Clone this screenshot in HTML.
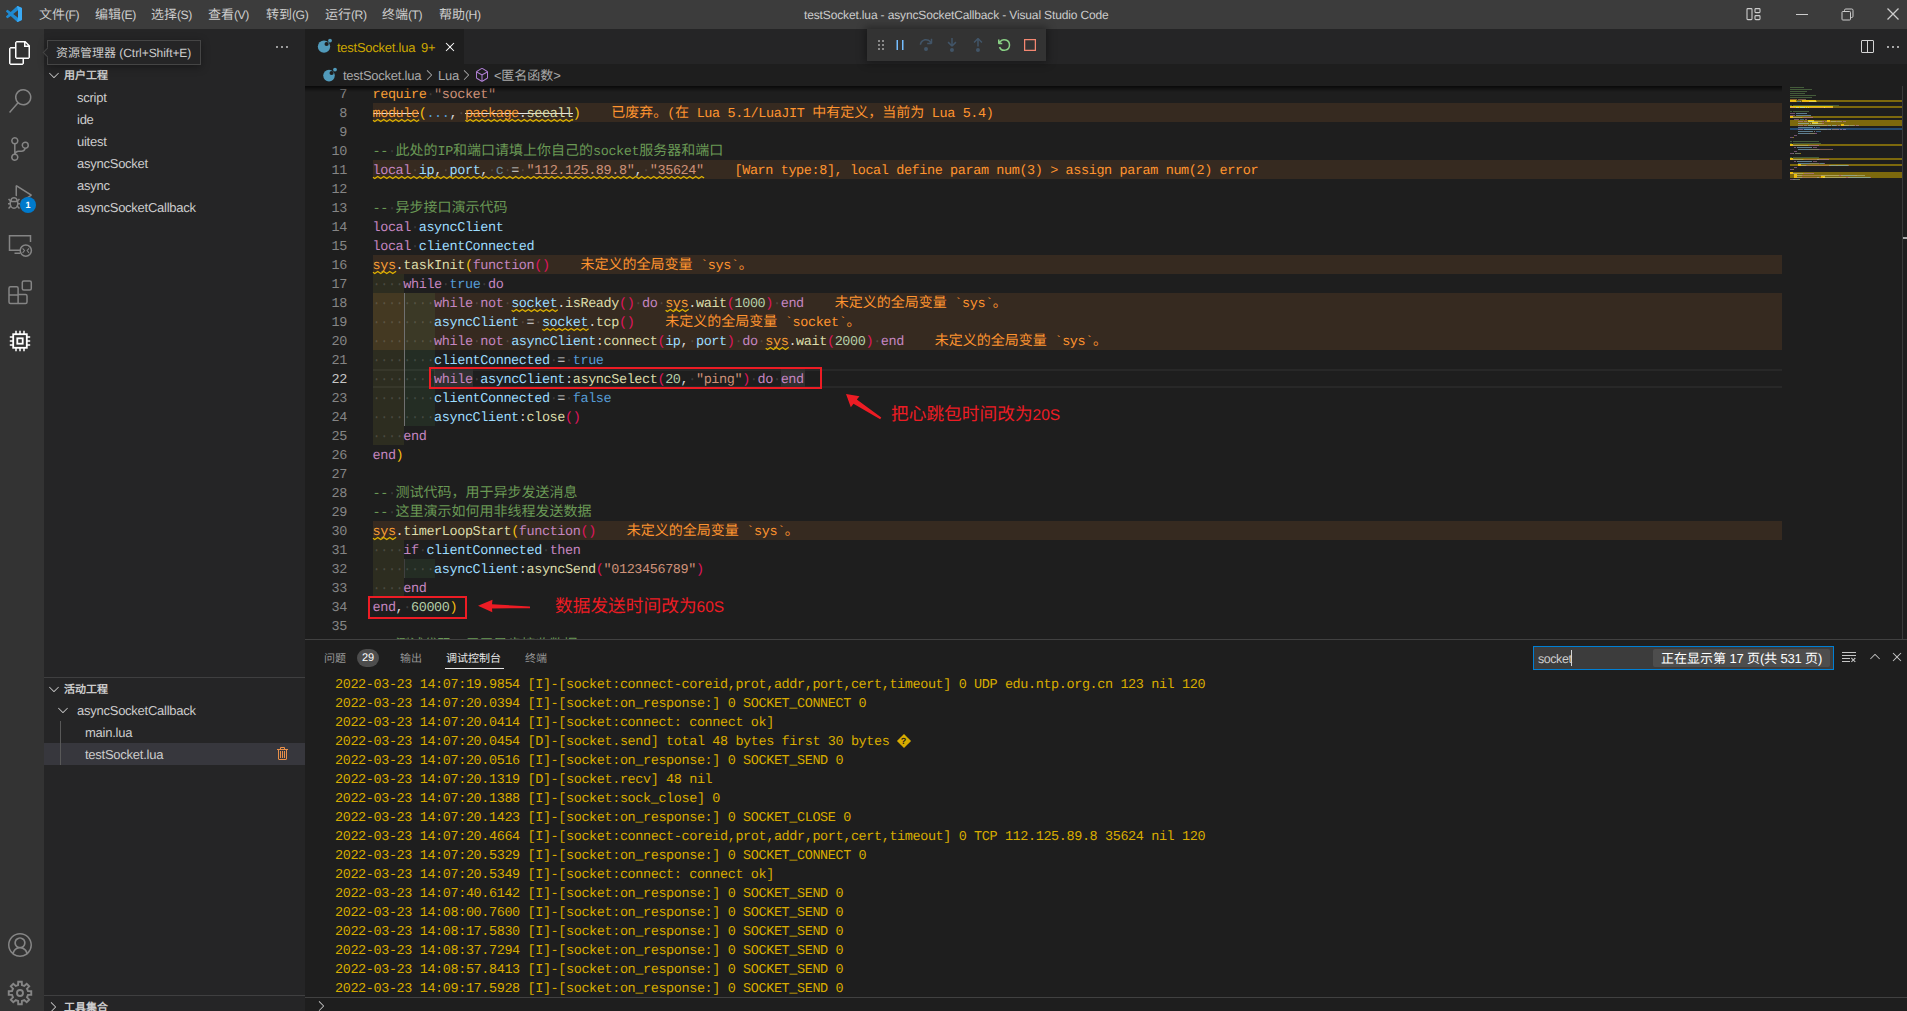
<!DOCTYPE html><html lang="zh-CN"><head><meta charset="utf-8"><title>testSocket.lua - asyncSocketCallback - Visual Studio Code</title><style>
*{box-sizing:border-box}
html,body{margin:0;padding:0}
body{width:1907px;height:1011px;overflow:hidden;background:#1e1e1e;position:relative;font-family:"Liberation Sans",sans-serif;font-size:13px;color:#ccc;text-rendering:geometricPrecision}
.abs,.abs>*{position:absolute}
div{position:absolute}
svg{position:absolute;overflow:visible}
.z{display:inline-block;white-space:nowrap;letter-spacing:0;line-height:0;text-align:justify;text-align-last:justify;font-family:"Liberation Sans",sans-serif}
.ui{white-space:nowrap;letter-spacing:-0.25px;line-height:20px;height:20px}
.m .z{font-size:13px}
.an .z{font-size:17.7px;font-weight:300}
.ans{font-family:"Liberation Sans",sans-serif;font-size:15.5px}
/* title */
#title{left:0;top:0;width:1907px;height:29px;background:#3c3c3c}
#act{left:0;top:29px;width:44px;height:982px;background:#333}
#side{left:44px;top:29px;width:261px;height:982px;background:#252526}
#tabs{left:305px;top:29px;width:1602px;height:35px;background:#252526}
#tab{left:0;top:0;width:159px;height:35px;background:#1e1e1e}
#bc{left:305px;top:64px;width:1602px;height:22px;background:#1e1e1e}
#ed{left:305px;top:86px;width:1602px;height:553px;background:#1e1e1e;overflow:hidden}
#edin{left:-305px;top:-86px;width:1907px;height:1011px}
#panel{left:305px;top:639px;width:1602px;height:372px;background:#1e1e1e;border-top:1px solid #414141}
.mono,.ln,.cd,.co{font-family:"Liberation Mono",monospace;font-size:13.5px;letter-spacing:-0.4013px;line-height:23px;height:19px;white-space:pre}
.ln{left:305px;width:42px;text-align:right;color:#858585}
.ln.act{color:#c6c6c6}
.cd{left:372.5px;color:#d4d4d4}
.cd .z{font-size:14px}
.co{left:335px;color:#d8ac00}
.lb{left:373px;width:1409px;height:19px;background:#362a20}
.cl{left:373px;width:1409px;height:19px;border-top:1px solid #2b2b2b;border-bottom:1px solid #2b2b2b;border-top-width:2px;border-bottom-width:2px;border-color:#282828}
.i1{left:373px;width:31px;height:19px;background:rgba(255,255,64,0.07)}
.i2{left:404px;width:31px;height:19px;background:rgba(127,255,127,0.07)}
.w{color:rgba(227,228,226,0.18)}
.k{color:#c586c0}.v{color:#9cdcfe}.f{color:#dcdcaa}.s{color:#ce9178}.n{color:#b5cea8}.c{color:#6a9955}.b{color:#569cd6}.o{color:#d4d4d4}
.g{color:#f79d35}
.b1{color:#f6c010}.b2{color:#e0155f}
.dim{opacity:.55}
.el{color:#ff942f}
.dl{background:linear-gradient(#e4e4e4,#e4e4e4) 0 5.5px/100% 1.2px no-repeat}
#mm{left:0;top:0;width:0;height:0}
#mm i{position:absolute;display:block}
.dia{display:inline-block;width:15.4px;height:10px;position:relative}
.dia b{position:absolute;left:1.5px;top:1px;width:10px;height:10px;background:#d8ac00;transform:rotate(45deg)}
.dia u{position:absolute;left:-1px;top:-1px;width:15px;text-align:center;color:#1e1e1e;font:bold 9px/14px 'Liberation Sans',sans-serif;text-decoration:none;letter-spacing:0}
</style></head><body>
<div id="title">
<svg style="left:6px;top:6px" width="16" height="16" viewBox="0 0 24 24" ><path fill="#1f8ad2" d="M23.15 2.587L18.21.21a1.494 1.494 0 0 0-1.705.29l-9.46 8.63-4.12-3.128a.999.999 0 0 0-1.276.057L.327 7.261A1 1 0 0 0 .326 8.74L3.899 12 .326 15.26a1 1 0 0 0 .001 1.479L1.65 17.94a.999.999 0 0 0 1.276.057l4.12-3.128 9.46 8.63a1.492 1.492 0 0 0 1.704.29l4.942-2.377A1.5 1.5 0 0 0 24 20.06V3.939a1.5 1.5 0 0 0-.85-1.352zm-5.146 14.861L10.826 12l7.178-5.448v10.896z"/><path fill="#3aaaf5" d="M18.004 6.552V17.448L16.5 23.5a1.492 1.492 0 0 0 1.71.29l4.942-2.377A1.5 1.5 0 0 0 24 20.06V3.939a1.5 1.5 0 0 0-.85-1.352L18.21.21a1.494 1.494 0 0 0-1.705.29z"/></svg>
<div class="ui m" style="left:39px;top:5px;color:#ccc;font-size:12.2px;letter-spacing:-0.45px;"><span class="z"  style="width:26.00px">文件</span>(F)</div>
<div class="ui m" style="left:95px;top:5px;color:#ccc;font-size:12.2px;letter-spacing:-0.45px;"><span class="z"  style="width:26.00px">编辑</span>(E)</div>
<div class="ui m" style="left:151px;top:5px;color:#ccc;font-size:12.2px;letter-spacing:-0.45px;"><span class="z"  style="width:26.00px">选择</span>(S)</div>
<div class="ui m" style="left:208px;top:5px;color:#ccc;font-size:12.2px;letter-spacing:-0.45px;"><span class="z"  style="width:26.00px">查看</span>(V)</div>
<div class="ui m" style="left:266px;top:5px;color:#ccc;font-size:12.2px;letter-spacing:-0.45px;"><span class="z"  style="width:26.00px">转到</span>(G)</div>
<div class="ui m" style="left:325px;top:5px;color:#ccc;font-size:12.2px;letter-spacing:-0.45px;"><span class="z"  style="width:26.00px">运行</span>(R)</div>
<div class="ui m" style="left:382px;top:5px;color:#ccc;font-size:12.2px;letter-spacing:-0.45px;"><span class="z"  style="width:26.00px">终端</span>(T)</div>
<div class="ui m" style="left:439px;top:5px;color:#ccc;font-size:12.2px;letter-spacing:-0.45px;"><span class="z"  style="width:26.00px">帮助</span>(H)</div>
<div class="ui" style="left:804px;top:5px;color:#ccc;font-size:12px;letter-spacing:-0.14px;">testSocket.lua - asyncSocketCallback - Visual Studio Code</div>
<svg style="left:1746px;top:8px" width="15" height="12" viewBox="0 0 15 12" ><g fill="none" stroke="#cccccc" stroke-width="1.1"><rect x="1" y="0.6" width="5" height="11" rx="0.8"/><rect x="9" y="0.6" width="5" height="4" rx="0.8"/><rect x="9" y="7.6" width="5" height="4" rx="0.8"/></g></svg><div style="left:1796px;top:14px;width:12px;height:1px;background:#cccccc"></div><svg style="left:1841px;top:8px" width="13" height="13" viewBox="0 0 13 13" ><g fill="none" stroke="#cccccc" stroke-width="1"><rect x="1" y="3.5" width="8.5" height="8.5" rx="0.8"/><path d="M3.500 3.500V2.300q0-1.300 1.300-1.300H10.700q1.300 0 1.300 1.300V8.200q0 1.300-1.300 1.300H9.500"/></g></svg><svg style="left:1887px;top:8px" width="12" height="12" viewBox="0 0 12 12" ><path d="M0.5 0.5L11.5 11.5M11.5 0.5L0.5 11.5" stroke="#cccccc" stroke-width="1.3" fill="none"/></svg>
</div>
<div id="act"><svg style="left:8px;top:12px" width="24" height="24" viewBox="0 0 24 24" ><path fill="#ffffff" d="M17.5 0h-9L7 1.5V6H2.5L1 7.5v15.07L2.5 24h12.07L16 22.57V18h4.7l1.3-1.43V4.5L17.5 0zm0 2.12l2.38 2.38H17.5V2.12zm-3 20.38h-12v-15H7v9.07L8.5 18h6v4.5zm6-6h-12v-15H16V6h4.5v10.5z"/></svg><svg style="left:8px;top:60px" width="24" height="24" viewBox="0 0 24 24" ><path fill="#858585" d="M15.25 0a8.25 8.25 0 0 0-6.18 13.72L1 22.88l1.12 1 8.05-9.12A8.251 8.251 0 1 0 15.25.01V0zm0 15a6.75 6.75 0 1 1 0-13.5 6.75 6.75 0 0 1 0 13.5z"/></svg><svg style="left:8px;top:108px" width="24" height="24" viewBox="0 0 24 24" ><path fill="#858585" d="M21.007 8.222A3.738 3.738 0 0 0 15.045 5.2a3.737 3.737 0 0 0 1.156 6.583 2.988 2.988 0 0 1-2.668 1.67h-2.99a4.456 4.456 0 0 0-2.989 1.165V7.4a3.737 3.737 0 1 0-1.494 0v9.117a3.776 3.776 0 1 0 1.816.099 2.99 2.99 0 0 1 2.668-1.667h2.99a4.484 4.484 0 0 0 4.223-3.039 3.736 3.736 0 0 0 3.25-3.687zM4.565 3.738a2.242 2.242 0 1 1 4.484 0 2.242 2.242 0 0 1-4.484 0zm4.484 16.441a2.242 2.242 0 1 1-4.484 0 2.242 2.242 0 0 1 4.484 0zm8.221-9.715a2.242 2.242 0 1 1 0-4.485 2.242 2.242 0 0 1 0 4.485z"/></svg><svg style="left:8px;top:156px" width="24" height="24" viewBox="0 0 24 24" ><path fill="#858585" d="M10.94 13.5l-1.32 1.32a3.73 3.73 0 0 0-7.24 0L1.06 13.5 0 14.56l1.72 1.72-.22.22V18H0v1.5h1.5v.08c.077.489.214.966.41 1.42L0 22.94 1.06 24l1.65-1.65A4.308 4.308 0 0 0 6 24a4.31 4.31 0 0 0 3.29-1.65L10.94 24 12 22.94 10.09 21c.198-.464.336-.951.41-1.45v-.1H12V18h-1.5v-1.5l-.22-.22L12 14.56l-1.06-1.06zM6 13.5a2.25 2.25 0 0 1 2.25 2.25h-4.5A2.25 2.25 0 0 1 6 13.5zm3 6a3.33 3.33 0 0 1-3 3 3.33 3.33 0 0 1-3-3v-2.25h6v2.25zm14.76-9.9v1.26L13.5 17.37V15.6l8.5-5.37L9 2v9.46a5.07 5.07 0 0 0-1.5-.72V.63L8.64 0l15.12 9.6z"/></svg><div style="left:20px;top:168px;width:16px;height:16px;border-radius:8px;background:#007acc;color:#fff;font-size:9px;font-weight:bold;line-height:16px;text-align:center">1</div><svg style="left:8px;top:204px" width="24" height="24" viewBox="0 0 24 24" ><g fill="none" stroke="#858585" stroke-width="1.5"><path d="M18.5 17.25H1.5V2.75H22.5V9"/><path d="M6.5 20.25H12"/><circle cx="17.8" cy="17.6" r="5.6" fill="#333"/><path d="M14.6 15.4l1.9 2.2-1.9 2.2M21 15.4l-1.9 2.2 1.9 2.2" stroke-width="1.1"/></g></svg><svg style="left:8px;top:251px" width="24" height="24" viewBox="0 0 24 24" ><g fill="none" stroke="#858585" stroke-width="1.5"><path d="M1 8.2q0-1.5 1.5-1.5H8.6q1.5 0 1.5 1.5V14.5H17.5q1.5 0 1.5 1.5V22q0 1.5-1.5 1.5H2.5q-1.5 0-1.5-1.5z"/><path d="M1 14.9H10.1M10.1 14.5V23.5"/><rect x="14.3" y="1" width="9" height="9" rx="1.5"/></g></svg><svg style="left:8px;top:300px" width="24" height="24" viewBox="0 0 24 24" ><g fill="none" stroke="#fff"><rect x="5.2" y="5.2" width="13.6" height="13.6" stroke-width="1.8"/><rect x="9.3" y="9.3" width="5.4" height="5.4" stroke-width="1.8"/><path stroke-width="1.5" d="M8 1.8V5M8 19V22.2M1.8 8H5M19 8H22.2"/><path stroke-width="1.5" d="M12 1.8V5M12 19V22.2M1.8 12H5M19 12H22.2"/><path stroke-width="1.5" d="M16 1.8V5M16 19V22.2M1.8 16H5M19 16H22.2"/></g></svg><svg style="left:8px;top:904px" width="24" height="24" viewBox="0 0 16 16" ><path fill="#858585" d="M16 7.992C16 3.58 12.416 0 8 0S0 3.58 0 7.992c0 2.43 1.104 4.62 2.832 6.09.016.016.032.016.032.032.144.112.288.224.448.336.08.048.144.111.224.175A7.98 7.98 0 0 0 8.016 16a7.98 7.98 0 0 0 4.48-1.375c.08-.048.144-.111.224-.16.144-.111.304-.223.448-.335.016-.016.032-.016.032-.032 1.696-1.487 2.8-3.676 2.8-6.106zm-8 7.001c-1.504 0-2.88-.48-4.016-1.279.016-.128.048-.255.08-.383a4.17 4.17 0 0 1 .416-.991c.176-.304.384-.576.64-.816.24-.24.528-.463.816-.639.304-.176.624-.304.976-.4A4.15 4.15 0 0 1 8 10.342a4.185 4.185 0 0 1 2.928 1.166c.368.368.656.8.864 1.295.112.288.192.592.24.911A7.03 7.03 0 0 1 8 14.993zm-2.448-7.4a2.49 2.49 0 0 1-.208-1.024c0-.351.064-.703.208-1.023.144-.32.336-.607.576-.847.24-.24.528-.431.848-.575.32-.144.672-.208 1.024-.208.368 0 .704.064 1.024.208.32.144.608.336.848.575.24.24.432.528.576.847.144.32.208.672.208 1.023 0 .368-.064.704-.208 1.023a2.84 2.84 0 0 1-.576.848 2.84 2.84 0 0 1-.848.575 2.715 2.715 0 0 1-2.064 0 2.84 2.84 0 0 1-.848-.575 2.526 2.526 0 0 1-.56-.848zm7.424 5.306c0-.032-.016-.048-.016-.08a5.22 5.22 0 0 0-.688-1.406 4.883 4.883 0 0 0-1.088-1.135 5.207 5.207 0 0 0-1.04-.608 2.82 2.82 0 0 0 .464-.383 4.2 4.2 0 0 0 .624-.784 3.624 3.624 0 0 0 .528-1.934 3.71 3.71 0 0 0-.288-1.47 3.799 3.799 0 0 0-.816-1.199 3.845 3.845 0 0 0-1.2-.8 3.72 3.72 0 0 0-1.472-.287 3.72 3.72 0 0 0-1.472.288 3.631 3.631 0 0 0-1.2.815 3.84 3.84 0 0 0-.8 1.199 3.71 3.71 0 0 0-.288 1.47c0 .352.048.688.144 1.007.096.336.224.64.4.927.16.288.384.544.624.784.144.144.304.271.48.383a5.12 5.12 0 0 0-1.04.624c-.416.32-.784.703-1.088 1.119a4.999 4.999 0 0 0-.688 1.406c-.016.032-.016.064-.016.08C1.776 11.636.992 9.91.992 7.992.992 4.14 4.144.991 8 .991s7.008 3.149 7.008 7.001a6.96 6.96 0 0 1-2.032 4.907z"/></svg><svg style="left:8px;top:952px" width="24" height="24" viewBox="0 0 24 24" ><path fill="none" stroke="#858585" stroke-width="1.9" stroke-linejoin="miter" d="M10.09 4.03L10.22 0.74L13.78 0.74L13.91 4.03L16.28 5.01L18.70 2.78L21.22 5.30L18.99 7.72L19.97 10.09L23.26 10.22L23.26 13.78L19.97 13.91L18.99 16.28L21.22 18.70L18.70 21.22L16.28 18.99L13.91 19.97L13.78 23.26L10.22 23.26L10.09 19.97L7.72 18.99L5.30 21.22L2.78 18.70L5.01 16.28L4.03 13.91L0.74 13.78L0.74 10.22L4.03 10.09L5.01 7.72L2.78 5.30L5.30 2.78L7.72 5.01Z"/><circle cx="12" cy="12" r="3" fill="none" stroke="#858585" stroke-width="1.9"/></svg></div>
<div id="side"><svg style="left:230px;top:10px" width="16" height="16" viewBox="0 0 16 16" ><path fill="#c5c5c5" d="M4 8a1 1 0 1 1-2 0 1 1 0 0 1 2 0zm5 0a1 1 0 1 1-2 0 1 1 0 0 1 2 0zm5 0a1 1 0 1 1-2 0 1 1 0 0 1 2 0z"/></svg><svg style="left:2px;top:38px" width="16" height="16" viewBox="0 0 16 16" ><path fill="#c5c5c5" d="M7.976 10.072l4.357-4.357.62.618L8.284 11h-.618L3 6.333l.619-.618 4.357 4.357z"/></svg><div class="ui" style="left:20px;top:37px;color:#ccc;font-size:11px;letter-spacing:0px;font-weight:bold;"><span class="z"  style="width:44.00px">用户工程</span></div><div class="ui" style="left:33px;top:59px;color:#ccc;font-size:13px;letter-spacing:-0.25px;">script</div><div class="ui" style="left:33px;top:81px;color:#ccc;font-size:13px;letter-spacing:-0.25px;">ide</div><div class="ui" style="left:33px;top:103px;color:#ccc;font-size:13px;letter-spacing:-0.25px;">uitest</div><div class="ui" style="left:33px;top:125px;color:#ccc;font-size:13px;letter-spacing:-0.25px;">asyncSocket</div><div class="ui" style="left:33px;top:147px;color:#ccc;font-size:13px;letter-spacing:-0.25px;">async</div><div class="ui" style="left:33px;top:169px;color:#ccc;font-size:13px;letter-spacing:-0.25px;">asyncSocketCallback</div><div style="left:0;top:648px;width:261px;height:1px;background:#3f3f40"></div><svg style="left:2px;top:652px" width="16" height="16" viewBox="0 0 16 16" ><path fill="#c5c5c5" d="M7.976 10.072l4.357-4.357.62.618L8.284 11h-.618L3 6.333l.619-.618 4.357 4.357z"/></svg><div class="ui" style="left:20px;top:651px;color:#ccc;font-size:11px;letter-spacing:0px;font-weight:bold;"><span class="z"  style="width:44.00px">活动工程</span></div><svg style="left:11px;top:673px" width="16" height="16" viewBox="0 0 16 16" ><path fill="#c5c5c5" d="M7.976 10.072l4.357-4.357.62.618L8.284 11h-.618L3 6.333l.619-.618 4.357 4.357z"/></svg><div class="ui" style="left:33px;top:672px;color:#ccc;font-size:13px;letter-spacing:-0.25px;">asyncSocketCallback</div><div style="left:0;top:714px;width:261px;height:22px;background:#37373d"></div><div style="left:16px;top:692px;width:1px;height:44px;background:#585858"></div><div class="ui" style="left:41px;top:694px;color:#ccc;font-size:13px;letter-spacing:-0.25px;">main.lua</div><div class="ui" style="left:41px;top:716px;color:#ccc;font-size:13px;letter-spacing:-0.25px;">testSocket.lua</div><svg style="left:231px;top:717px" width="16" height="16" viewBox="0 0 16 16" ><path fill="#e8904a" d="M10 3h3v1h-1v9l-1 1H4l-1-1V4H2V3h3V2a1 1 0 0 1 1-1h3a1 1 0 0 1 1 1v1zM9 2H6v1h3V2zM4 13h7V4H4v9zm2-8H5v7h1V5zm1 0h1v7H7V5zm2 0h1v7H9V5z"/></svg><div style="left:0;top:966px;width:261px;height:1px;background:#3f3f40"></div><svg style="left:1px;top:970px" width="16" height="16" viewBox="0 0 16 16" ><path fill="#c5c5c5" d="M10.072 8.024L5.715 3.667l.618-.62L11 7.716v.618L6.333 13l-.618-.619 4.357-4.357z"/></svg><div class="ui" style="left:20px;top:969px;color:#ccc;font-size:11px;letter-spacing:0px;font-weight:bold;"><span class="z"  style="width:44.00px">工具集合</span></div></div>
<div id="tabs"><div id="tab"></div><svg style="left:9px;top:7px" width="20" height="20" viewBox="0 0 20 20" ><circle cx="10" cy="10.6" r="6.2" fill="#519aba"/><circle cx="12.6" cy="8" r="2.1" fill="#1e1e1e"/><circle cx="16" cy="4.6" r="1.9" fill="#519aba"/></svg><div class="ui" style="left:32px;top:8.5px;color:#cca700;font-size:13px;letter-spacing:-0.25px;">testSocket.lua</div><div class="ui" style="left:116px;top:8.5px;color:#cca700;font-size:13px;letter-spacing:-0.25px;">9+</div><svg style="left:137px;top:10px" width="16" height="16" viewBox="0 0 16 16" ><path fill="#ffffff" d="M8 8.707l3.646 3.647.708-.707L8.707 8l3.647-3.646-.707-.708L8 7.293 4.354 3.646l-.707.708L7.293 8l-3.646 3.646.707.708L8 8.707z"/></svg><svg style="left:1554px;top:9.5px" width="16" height="16" viewBox="0 0 16 16" ><path fill="#d4d4d4" d="M14 1H3L2 2v11l1 1h11l1-1V2l-1-1zM8 13H3V2h5v11zm6 0H9V2h5v11z"/></svg><svg style="left:1580px;top:10px" width="16" height="16" viewBox="0 0 16 16" ><path fill="#d4d4d4" d="M4 8a1 1 0 1 1-2 0 1 1 0 0 1 2 0zm5 0a1 1 0 1 1-2 0 1 1 0 0 1 2 0zm5 0a1 1 0 1 1-2 0 1 1 0 0 1 2 0z"/></svg></div>
<div id="bc"><svg style="left:14px;top:0.5px" width="20" height="20" viewBox="0 0 20 20" ><circle cx="10" cy="10.6" r="5.8" fill="#519aba"/><circle cx="12.6" cy="8" r="2.1" fill="#1e1e1e"/><circle cx="16" cy="4.6" r="1.9" fill="#519aba"/></svg><div class="ui" style="left:38px;top:2px;color:#a9a9a9;font-size:13px;letter-spacing:-0.25px;">testSocket.lua</div><svg style="left:116px;top:3px" width="16" height="16" viewBox="0 0 16 16" ><path fill="#a9a9a9" d="M10.072 8.024L5.715 3.667l.618-.62L11 7.716v.618L6.333 13l-.618-.619 4.357-4.357z"/></svg><div class="ui" style="left:133px;top:2px;color:#a9a9a9;font-size:13px;letter-spacing:-0.25px;">Lua</div><svg style="left:153px;top:3px" width="16" height="16" viewBox="0 0 16 16" ><path fill="#a9a9a9" d="M10.072 8.024L5.715 3.667l.618-.62L11 7.716v.618L6.333 13l-.618-.619 4.357-4.357z"/></svg><svg style="left:169px;top:3px" width="16" height="16" viewBox="0 0 16 16" ><path fill="#b180d7" d="M13.51 4l-5-3h-1l-5 3-.49.86v6l.49.85 5 3h1l5-3 .49-.85v-6L13.51 4zm-6 9.56l-4.5-2.7V5.7l4.5 2.45v5.41zM3.27 4.7l4.74-2.84 4.74 2.84-4.74 2.59L3.27 4.7zm9.74 6.16l-4.5 2.7V8.15l4.5-2.45v5.16z"/></svg><div class="ui" style="left:189px;top:2px;color:#a9a9a9;font-size:13px;letter-spacing:-0.25px;">&lt;<span class="z"  style="width:52.00px">匿名函数</span>&gt;</div></div>
<div id="ed"><div id="edin">
<div class="ln" style="top:84px">7</div>
<div class="cd" style="top:84px"><span class="g">require</span><span class="w">·</span><span class="s">"socket"</span></div>
<div class="lb" style="top:103px"></div>
<div class="ln" style="top:103px">8</div>
<div class="cd" style="top:103px"><span class="sq"><span class="g dl">module</span></span><span class="b1">(</span><span class="b">...</span><span class="o">,</span><span class="w">·</span><span class="sq"><span class="dl"><span class="g">package</span><span class="o">.</span><span class="f">seeall</span></span></span><span class="b1">)</span><span class="el">&nbsp;&nbsp;&nbsp;&nbsp;<span class="z" style="width:56.00px">已废弃。</span>(<span class="z" style="width:14.00px">在</span> Lua 5.1/LuaJIT <span class="z" style="width:112.00px">中有定义，当前为</span> Lua 5.4)</span></div>
<div class="ln" style="top:122px">9</div>
<div class="ln" style="top:141px">10</div>
<div class="cd" style="top:141px"><span class="c">--</span><span class="w">·</span><span class="c"><span class="z" style="width:42.00px">此处的</span>IP<span class="z" style="width:140.00px">和端口请填上你自己的</span>socket<span class="z" style="width:84.00px">服务器和端口</span></span></div>
<div class="lb" style="top:160px"></div>
<div class="ln" style="top:160px">11</div>
<div class="cd" style="top:160px"><span class="sq"><span class="k">local</span><span class="w">·</span><span class="v">ip</span><span class="o">,</span><span class="w">·</span><span class="v">port</span><span class="o">,</span><span class="w">·</span><span class="v dim">c</span><span class="w">·</span><span class="o">=</span><span class="w">·</span><span class="s">"112.125.89.8"</span><span class="o">,</span><span class="w">·</span><span class="s">"35624"</span></span><span class="el">&nbsp;&nbsp;&nbsp;&nbsp;[Warn type:8], local define param num(3) &gt; assign param num(2) error</span></div>
<div class="ln" style="top:179px">12</div>
<div class="ln" style="top:198px">13</div>
<div class="cd" style="top:198px"><span class="c">--</span><span class="w">·</span><span class="c"><span class="z" style="width:112.00px">异步接口演示代码</span></span></div>
<div class="ln" style="top:217px">14</div>
<div class="cd" style="top:217px"><span class="k">local</span><span class="w">·</span><span class="v">asyncClient</span></div>
<div class="ln" style="top:236px">15</div>
<div class="cd" style="top:236px"><span class="k">local</span><span class="w">·</span><span class="v">clientConnected</span></div>
<div class="lb" style="top:255px"></div>
<div class="ln" style="top:255px">16</div>
<div class="cd" style="top:255px"><span class="g sq">sys</span><span class="o">.</span><span class="f">taskInit</span><span class="b1">(</span><span class="k">function</span><span class="b2">()</span><span class="el">&nbsp;&nbsp;&nbsp;&nbsp;<span class="z" style="width:112.00px">未定义的全局变量</span> `sys`<span class="z" style="width:14.00px">。</span></span></div>
<div class="i1" style="top:274px"></div>
<div class="ln" style="top:274px">17</div>
<div class="cd" style="top:274px"><span class="w">····</span><span class="k">while</span><span class="w">·</span><span class="b">true</span><span class="w">·</span><span class="k">do</span></div>
<div class="lb" style="top:293px"></div>
<div class="i1" style="top:293px"></div>
<div class="i2" style="top:293px"></div>
<div class="ln" style="top:293px">18</div>
<div class="cd" style="top:293px"><span class="w">········</span><span class="k">while</span><span class="w">·</span><span class="k">not</span><span class="w">·</span><span class="v sq">socket</span><span class="o">.</span><span class="f">isReady</span><span class="b2">()</span><span class="w">·</span><span class="k">do</span><span class="w">·</span><span class="g sq">sys</span><span class="o">.</span><span class="f">wait</span><span class="b2">(</span><span class="n">1000</span><span class="b2">)</span><span class="w">·</span><span class="k">end</span><span class="el">&nbsp;&nbsp;&nbsp;&nbsp;<span class="z" style="width:112.00px">未定义的全局变量</span> `sys`<span class="z" style="width:14.00px">。</span></span></div>
<div class="lb" style="top:312px"></div>
<div class="i1" style="top:312px"></div>
<div class="i2" style="top:312px"></div>
<div class="ln" style="top:312px">19</div>
<div class="cd" style="top:312px"><span class="w">········</span><span class="v">asyncClient</span><span class="w">·</span><span class="o">=</span><span class="w">·</span><span class="v sq">socket</span><span class="o">.</span><span class="f">tcp</span><span class="b2">()</span><span class="el">&nbsp;&nbsp;&nbsp;&nbsp;<span class="z" style="width:112.00px">未定义的全局变量</span> `socket`<span class="z" style="width:14.00px">。</span></span></div>
<div class="lb" style="top:331px"></div>
<div class="i1" style="top:331px"></div>
<div class="i2" style="top:331px"></div>
<div class="ln" style="top:331px">20</div>
<div class="cd" style="top:331px"><span class="w">········</span><span class="k">while</span><span class="w">·</span><span class="k">not</span><span class="w">·</span><span class="v">asyncClient</span><span class="o">:</span><span class="f">connect</span><span class="b2">(</span><span class="v">ip</span><span class="o">,</span><span class="w">·</span><span class="v">port</span><span class="b2">)</span><span class="w">·</span><span class="k">do</span><span class="w">·</span><span class="g sq">sys</span><span class="o">.</span><span class="f">wait</span><span class="b2">(</span><span class="n">2000</span><span class="b2">)</span><span class="w">·</span><span class="k">end</span><span class="el">&nbsp;&nbsp;&nbsp;&nbsp;<span class="z" style="width:112.00px">未定义的全局变量</span> `sys`<span class="z" style="width:14.00px">。</span></span></div>
<div class="i1" style="top:350px"></div>
<div class="i2" style="top:350px"></div>
<div class="ln" style="top:350px">21</div>
<div class="cd" style="top:350px"><span class="w">········</span><span class="v">clientConnected</span><span class="w">·</span><span class="o">=</span><span class="w">·</span><span class="b">true</span></div>
<div class="cl" style="top:369px"></div>
<div style="left:434px;top:369px;width:39px;height:19px;background:#303030"></div>
<div style="left:781px;top:369px;width:24px;height:19px;background:#303030"></div>
<div class="i1" style="top:369px"></div>
<div class="i2" style="top:369px"></div>
<div class="ln act" style="top:369px">22</div>
<div class="cd" style="top:369px"><span class="w">········</span><span class="k">while</span><span class="w">·</span><span class="v">asyncClient</span><span class="o">:</span><span class="f">asyncSelect</span><span class="b2">(</span><span class="n">20</span><span class="o">,</span><span class="w">·</span><span class="s">"ping"</span><span class="b2">)</span><span class="w">·</span><span class="k">do</span><span class="w">·</span><span class="k">end</span></div>
<div class="i1" style="top:388px"></div>
<div class="i2" style="top:388px"></div>
<div class="ln" style="top:388px">23</div>
<div class="cd" style="top:388px"><span class="w">········</span><span class="v">clientConnected</span><span class="w">·</span><span class="o">=</span><span class="w">·</span><span class="b">false</span></div>
<div class="i1" style="top:407px"></div>
<div class="i2" style="top:407px"></div>
<div class="ln" style="top:407px">24</div>
<div class="cd" style="top:407px"><span class="w">········</span><span class="v">asyncClient</span><span class="o">:</span><span class="f">close</span><span class="b2">()</span></div>
<div class="i1" style="top:426px"></div>
<div class="ln" style="top:426px">25</div>
<div class="cd" style="top:426px"><span class="w">····</span><span class="k">end</span></div>
<div class="ln" style="top:445px">26</div>
<div class="cd" style="top:445px"><span class="k">end</span><span class="b1">)</span></div>
<div class="ln" style="top:464px">27</div>
<div class="ln" style="top:483px">28</div>
<div class="cd" style="top:483px"><span class="c">--</span><span class="w">·</span><span class="c"><span class="z" style="width:182.00px">测试代码，用于异步发送消息</span></span></div>
<div class="ln" style="top:502px">29</div>
<div class="cd" style="top:502px"><span class="c">--</span><span class="w">·</span><span class="c"><span class="z" style="width:196.00px">这里演示如何用非线程发送数据</span></span></div>
<div class="lb" style="top:521px"></div>
<div class="ln" style="top:521px">30</div>
<div class="cd" style="top:521px"><span class="g sq">sys</span><span class="o">.</span><span class="f">timerLoopStart</span><span class="b1">(</span><span class="k">function</span><span class="b2">()</span><span class="el">&nbsp;&nbsp;&nbsp;&nbsp;<span class="z" style="width:112.00px">未定义的全局变量</span> `sys`<span class="z" style="width:14.00px">。</span></span></div>
<div class="i1" style="top:540px"></div>
<div class="ln" style="top:540px">31</div>
<div class="cd" style="top:540px"><span class="w">····</span><span class="k">if</span><span class="w">·</span><span class="v">clientConnected</span><span class="w">·</span><span class="k">then</span></div>
<div class="i1" style="top:559px"></div>
<div class="i2" style="top:559px"></div>
<div class="ln" style="top:559px">32</div>
<div class="cd" style="top:559px"><span class="w">········</span><span class="v">asyncClient</span><span class="o">:</span><span class="f">asyncSend</span><span class="b2">(</span><span class="s">"0123456789"</span><span class="b2">)</span></div>
<div class="i1" style="top:578px"></div>
<div class="ln" style="top:578px">33</div>
<div class="cd" style="top:578px"><span class="w">····</span><span class="k">end</span></div>
<div class="ln" style="top:597px">34</div>
<div class="cd" style="top:597px"><span class="k">end</span><span class="o">,</span><span class="w">·</span><span class="n">60000</span><span class="b1">)</span></div>
<div class="ln" style="top:616px">35</div>
<div class="ln" style="top:635px">36</div>
<div class="cd" style="top:635px"><span class="c">--</span><span class="w">·</span><span class="c"><span class="z" style="width:182.00px">测试代码，用于异步接收数据</span></span></div><svg style="left:0;top:0" width="1907" height="1011" viewBox="0 0 1907 1011"><path d="M373.00 120.32L374.75 121.60L377.75 119.40L380.75 121.60L383.75 119.40L386.75 121.60L389.75 119.40L392.75 121.60L395.75 119.40L398.75 121.60L401.75 119.40L404.75 121.60L407.75 119.40L410.75 121.60L413.75 119.40L416.75 121.60L419.20 119.80M465.40 120.32L467.15 121.60L470.15 119.40L473.15 121.60L476.15 119.40L479.15 121.60L482.15 119.40L485.15 121.60L488.15 119.40L491.15 121.60L494.15 119.40L497.15 121.60L500.15 119.40L503.15 121.60L506.15 119.40L509.15 121.60L512.15 119.40L515.15 121.60L518.15 119.40L521.15 121.60L524.15 119.40L527.15 121.60L530.15 119.40L533.15 121.60L536.15 119.40L539.15 121.60L542.15 119.40L545.15 121.60L548.15 119.40L551.15 121.60L554.15 119.40L557.15 121.60L560.15 119.40L563.15 121.60L566.15 119.40L569.15 121.60L572.15 119.40L573.20 120.17M373.00 177.32L374.75 178.60L377.75 176.40L380.75 178.60L383.75 176.40L386.75 178.60L389.75 176.40L392.75 178.60L395.75 176.40L398.75 178.60L401.75 176.40L404.75 178.60L407.75 176.40L410.75 178.60L413.75 176.40L416.75 178.60L419.75 176.40L422.75 178.60L425.75 176.40L428.75 178.60L431.75 176.40L434.75 178.60L437.75 176.40L440.75 178.60L443.75 176.40L446.75 178.60L449.75 176.40L452.75 178.60L455.75 176.40L458.75 178.60L461.75 176.40L464.75 178.60L467.75 176.40L470.75 178.60L473.75 176.40L476.75 178.60L479.75 176.40L482.75 178.60L485.75 176.40L488.75 178.60L491.75 176.40L494.75 178.60L497.75 176.40L500.75 178.60L503.75 176.40L506.75 178.60L509.75 176.40L512.75 178.60L515.75 176.40L518.75 178.60L521.75 176.40L524.75 178.60L527.75 176.40L530.75 178.60L533.75 176.40L536.75 178.60L539.75 176.40L542.75 178.60L545.75 176.40L548.75 178.60L551.75 176.40L554.75 178.60L557.75 176.40L560.75 178.60L563.75 176.40L566.75 178.60L569.75 176.40L572.75 178.60L575.75 176.40L578.75 178.60L581.75 176.40L584.75 178.60L587.75 176.40L590.75 178.60L593.75 176.40L596.75 178.60L599.75 176.40L602.75 178.60L605.75 176.40L608.75 178.60L611.75 176.40L614.75 178.60L617.75 176.40L620.75 178.60L623.75 176.40L626.75 178.60L629.75 176.40L632.75 178.60L635.75 176.40L638.75 178.60L641.75 176.40L644.75 178.60L647.75 176.40L650.75 178.60L653.75 176.40L656.75 178.60L659.75 176.40L662.75 178.60L665.75 176.40L668.75 178.60L671.75 176.40L674.75 178.60L677.75 176.40L680.75 178.60L683.75 176.40L686.75 178.60L689.75 176.40L692.75 178.60L695.75 176.40L698.75 178.60L701.75 176.40L704.10 178.12M373.00 272.32L374.75 273.60L377.75 271.40L380.75 273.60L383.75 271.40L386.75 273.60L389.75 271.40L392.75 273.60L395.75 271.40L396.10 271.66M511.60 310.32L513.35 311.60L516.35 309.40L519.35 311.60L522.35 309.40L525.35 311.60L528.35 309.40L531.35 311.60L534.35 309.40L537.35 311.60L540.35 309.40L543.35 311.60L546.35 309.40L549.35 311.60L552.35 309.40L555.35 311.60L557.80 309.80M665.60 310.32L667.35 311.60L670.35 309.40L673.35 311.60L676.35 309.40L679.35 311.60L682.35 309.40L685.35 311.60L688.35 309.40L688.70 309.66M542.40 329.32L544.15 330.60L547.15 328.40L550.15 330.60L553.15 328.40L556.15 330.60L559.15 328.40L562.15 330.60L565.15 328.40L568.15 330.60L571.15 328.40L574.15 330.60L577.15 328.40L580.15 330.60L583.15 328.40L586.15 330.60L588.60 328.80M765.70 348.32L767.45 349.60L770.45 347.40L773.45 349.60L776.45 347.40L779.45 349.60L782.45 347.40L785.45 349.60L788.45 347.40L788.80 347.66M373.00 538.32L374.75 539.60L377.75 537.40L380.75 539.60L383.75 537.40L386.75 539.60L389.75 537.40L392.75 539.60L395.75 537.40L396.10 537.66" fill="none" stroke="#e0b400" stroke-width="1.25" stroke-linejoin="round"/></svg>
<div style="left:404px;top:293px;width:1px;height:133px;background:#707070"></div><div style="left:404px;top:559px;width:1px;height:19px;background:#404040"></div><div style="left:305px;top:86px;width:1477px;height:6px;background:linear-gradient(#000 0,rgba(0,0,0,0) 100%);opacity:.7"></div><div style="left:1902px;top:86px;width:1px;height:553px;background:#3a3a3a"></div><div style="left:1903px;top:237px;width:4px;height:2px;background:#a8a8a8"></div>
<div style="left:429px;top:367px;width:393px;height:22px;border:2px solid #ed1c24"></div><div style="left:368px;top:596px;width:99px;height:23px;border:2px solid #ed1c24"></div><svg style="left:0px;top:0px" width="1907" height="1011" viewBox="0 0 1907 1011" style="left:0;top:0;pointer-events:none"><g fill="#ed1c24"><path d="M846 394L859.500 396.200L856.800 399.600L881.300 417.600L880.200 419.200L853.500 403.800L850.800 407.200Z"/><path d="M478 605.700L492.500 599.800L492 604.200L530 606.600L530 608.200L492 608.400L492.300 612.200Z"/></g></svg><div class="an" style="left:891px;top:405px;font-family:'Liberation Serif',serif;font-size:17px;line-height:20px;height:20px;white-space:nowrap;color:#ed1c24"><span class="z" style="width:141.60px">把心跳包时间改为</span><span class="ans">20S</span></div><div class="an" style="left:555px;top:597px;font-family:'Liberation Serif',serif;font-size:17px;line-height:20px;height:20px;white-space:nowrap;color:#ed1c24"><span class="z" style="width:141.60px">数据发送时间改为</span><span class="ans">60S</span></div>
</div></div>
<div id="mm"><i style="left:1790px;top:100px;width:112px;height:2px;background:#cca700;opacity:0.55"></i><i style="left:1790px;top:100px;width:6px;height:2px;background:#e9c200"></i><i style="left:1802px;top:100px;width:14px;height:2px;background:#e9c200"></i><i style="left:1790px;top:106px;width:112px;height:2px;background:#cca700;opacity:0.55"></i><i style="left:1790px;top:106px;width:43px;height:2px;background:#e9c200"></i><i style="left:1790px;top:116px;width:112px;height:2px;background:#cca700;opacity:0.55"></i><i style="left:1790px;top:116px;width:3px;height:2px;background:#e9c200"></i><i style="left:1790px;top:120px;width:112px;height:2px;background:#cca700;opacity:0.55"></i><i style="left:1808px;top:120px;width:6px;height:2px;background:#e9c200"></i><i style="left:1827px;top:120px;width:3px;height:2px;background:#e9c200"></i><i style="left:1790px;top:122px;width:112px;height:2px;background:#cca700;opacity:0.55"></i><i style="left:1812px;top:122px;width:6px;height:2px;background:#e9c200"></i><i style="left:1790px;top:124px;width:112px;height:2px;background:#cca700;opacity:0.55"></i><i style="left:1841px;top:124px;width:3px;height:2px;background:#e9c200"></i><i style="left:1790px;top:144px;width:112px;height:2px;background:#cca700;opacity:0.55"></i><i style="left:1790px;top:144px;width:3px;height:2px;background:#e9c200"></i><i style="left:1790px;top:158px;width:112px;height:2px;background:#cca700;opacity:0.55"></i><i style="left:1790px;top:158px;width:3px;height:2px;background:#e9c200"></i><i style="left:1790px;top:164px;width:112px;height:2px;background:#cca700;opacity:0.55"></i><i style="left:1798px;top:164px;width:3px;height:2px;background:#e9c200"></i><i style="left:1790px;top:172px;width:112px;height:2px;background:#cca700;opacity:0.55"></i><i style="left:1790px;top:172px;width:3px;height:2px;background:#e9c200"></i><i style="left:1790px;top:174px;width:112px;height:2px;background:#cca700;opacity:0.55"></i><i style="left:1794px;top:174px;width:3px;height:2px;background:#e9c200"></i><i style="left:1790px;top:176px;width:112px;height:2px;background:#cca700;opacity:0.55"></i><i style="left:1794px;top:176px;width:3px;height:2px;background:#e9c200"></i><i style="left:1821px;top:176px;width:4px;height:2px;background:#e9c200"></i><i style="left:1790px;top:128px;width:112px;height:2px;background:#264f78;opacity:0.9"></i><i style="left:1790px;top:86.5px;width:14px;height:1px;background:#6a9955;opacity:0.5"></i><i style="left:1790px;top:88.5px;width:22px;height:1px;background:#6a9955;opacity:0.5"></i><i style="left:1790px;top:90.5px;width:17px;height:1px;background:#6a9955;opacity:0.5"></i><i style="left:1790px;top:92.5px;width:15px;height:1px;background:#6a9955;opacity:0.5"></i><i style="left:1790px;top:94.5px;width:26px;height:1px;background:#6a9955;opacity:0.5"></i><i style="left:1790px;top:96.5px;width:22px;height:1px;background:#6a9955;opacity:0.5"></i><i style="left:1790px;top:98.5px;width:7px;height:1px;background:#f0a53c;opacity:0.5"></i><i style="left:1798px;top:98.5px;width:8px;height:1px;background:#ce9178;opacity:0.5"></i><i style="left:1790px;top:100.5px;width:6px;height:1px;background:#f0a53c;opacity:0.5"></i><i style="left:1796px;top:100.5px;width:1px;height:1px;background:#ffd700;opacity:0.5"></i><i style="left:1797px;top:100.5px;width:3px;height:1px;background:#569cd6;opacity:0.5"></i><i style="left:1800px;top:100.5px;width:1px;height:1px;background:#d4d4d4;opacity:0.5"></i><i style="left:1802px;top:100.5px;width:7px;height:1px;background:#f0a53c;opacity:0.5"></i><i style="left:1809px;top:100.5px;width:1px;height:1px;background:#d4d4d4;opacity:0.5"></i><i style="left:1810px;top:100.5px;width:6px;height:1px;background:#dcdcaa;opacity:0.5"></i><i style="left:1816px;top:100.5px;width:1px;height:1px;background:#ffd700;opacity:0.5"></i><i style="left:1790px;top:104.5px;width:2px;height:1px;background:#6a9955;opacity:0.5"></i><i style="left:1793px;top:104.5px;width:46px;height:1px;background:#6a9955;opacity:0.5"></i><i style="left:1790px;top:106.5px;width:5px;height:1px;background:#c586c0;opacity:0.5"></i><i style="left:1796px;top:106.5px;width:2px;height:1px;background:#9cdcfe;opacity:0.5"></i><i style="left:1798px;top:106.5px;width:1px;height:1px;background:#d4d4d4;opacity:0.5"></i><i style="left:1800px;top:106.5px;width:4px;height:1px;background:#9cdcfe;opacity:0.5"></i><i style="left:1804px;top:106.5px;width:1px;height:1px;background:#d4d4d4;opacity:0.5"></i><i style="left:1806px;top:106.5px;width:1px;height:1px;background:#9cdcfe;opacity:0.5"></i><i style="left:1808px;top:106.5px;width:1px;height:1px;background:#d4d4d4;opacity:0.5"></i><i style="left:1810px;top:106.5px;width:14px;height:1px;background:#ce9178;opacity:0.5"></i><i style="left:1824px;top:106.5px;width:1px;height:1px;background:#d4d4d4;opacity:0.5"></i><i style="left:1826px;top:106.5px;width:7px;height:1px;background:#ce9178;opacity:0.5"></i><i style="left:1790px;top:110.5px;width:2px;height:1px;background:#6a9955;opacity:0.5"></i><i style="left:1793px;top:110.5px;width:16px;height:1px;background:#6a9955;opacity:0.5"></i><i style="left:1790px;top:112.5px;width:5px;height:1px;background:#c586c0;opacity:0.5"></i><i style="left:1796px;top:112.5px;width:11px;height:1px;background:#9cdcfe;opacity:0.5"></i><i style="left:1790px;top:114.5px;width:5px;height:1px;background:#c586c0;opacity:0.5"></i><i style="left:1796px;top:114.5px;width:15px;height:1px;background:#9cdcfe;opacity:0.5"></i><i style="left:1790px;top:116.5px;width:3px;height:1px;background:#f0a53c;opacity:0.5"></i><i style="left:1793px;top:116.5px;width:1px;height:1px;background:#d4d4d4;opacity:0.5"></i><i style="left:1794px;top:116.5px;width:8px;height:1px;background:#dcdcaa;opacity:0.5"></i><i style="left:1802px;top:116.5px;width:1px;height:1px;background:#ffd700;opacity:0.5"></i><i style="left:1803px;top:116.5px;width:8px;height:1px;background:#c586c0;opacity:0.5"></i><i style="left:1811px;top:116.5px;width:2px;height:1px;background:#da70d6;opacity:0.5"></i><i style="left:1794px;top:118.5px;width:5px;height:1px;background:#c586c0;opacity:0.5"></i><i style="left:1800px;top:118.5px;width:4px;height:1px;background:#569cd6;opacity:0.5"></i><i style="left:1805px;top:118.5px;width:2px;height:1px;background:#c586c0;opacity:0.5"></i><i style="left:1798px;top:120.5px;width:5px;height:1px;background:#c586c0;opacity:0.5"></i><i style="left:1804px;top:120.5px;width:3px;height:1px;background:#c586c0;opacity:0.5"></i><i style="left:1808px;top:120.5px;width:6px;height:1px;background:#9cdcfe;opacity:0.5"></i><i style="left:1814px;top:120.5px;width:1px;height:1px;background:#d4d4d4;opacity:0.5"></i><i style="left:1815px;top:120.5px;width:7px;height:1px;background:#dcdcaa;opacity:0.5"></i><i style="left:1822px;top:120.5px;width:2px;height:1px;background:#da70d6;opacity:0.5"></i><i style="left:1825px;top:120.5px;width:2px;height:1px;background:#c586c0;opacity:0.5"></i><i style="left:1828px;top:120.5px;width:3px;height:1px;background:#f0a53c;opacity:0.5"></i><i style="left:1831px;top:120.5px;width:1px;height:1px;background:#d4d4d4;opacity:0.5"></i><i style="left:1832px;top:120.5px;width:4px;height:1px;background:#dcdcaa;opacity:0.5"></i><i style="left:1836px;top:120.5px;width:1px;height:1px;background:#da70d6;opacity:0.5"></i><i style="left:1837px;top:120.5px;width:4px;height:1px;background:#b5cea8;opacity:0.5"></i><i style="left:1841px;top:120.5px;width:1px;height:1px;background:#da70d6;opacity:0.5"></i><i style="left:1843px;top:120.5px;width:3px;height:1px;background:#c586c0;opacity:0.5"></i><i style="left:1798px;top:122.5px;width:11px;height:1px;background:#9cdcfe;opacity:0.5"></i><i style="left:1810px;top:122.5px;width:1px;height:1px;background:#d4d4d4;opacity:0.5"></i><i style="left:1812px;top:122.5px;width:6px;height:1px;background:#9cdcfe;opacity:0.5"></i><i style="left:1818px;top:122.5px;width:1px;height:1px;background:#d4d4d4;opacity:0.5"></i><i style="left:1819px;top:122.5px;width:3px;height:1px;background:#dcdcaa;opacity:0.5"></i><i style="left:1822px;top:122.5px;width:2px;height:1px;background:#da70d6;opacity:0.5"></i><i style="left:1798px;top:124.5px;width:5px;height:1px;background:#c586c0;opacity:0.5"></i><i style="left:1804px;top:124.5px;width:3px;height:1px;background:#c586c0;opacity:0.5"></i><i style="left:1808px;top:124.5px;width:11px;height:1px;background:#9cdcfe;opacity:0.5"></i><i style="left:1819px;top:124.5px;width:1px;height:1px;background:#d4d4d4;opacity:0.5"></i><i style="left:1820px;top:124.5px;width:7px;height:1px;background:#dcdcaa;opacity:0.5"></i><i style="left:1827px;top:124.5px;width:1px;height:1px;background:#da70d6;opacity:0.5"></i><i style="left:1828px;top:124.5px;width:2px;height:1px;background:#9cdcfe;opacity:0.5"></i><i style="left:1830px;top:124.5px;width:1px;height:1px;background:#d4d4d4;opacity:0.5"></i><i style="left:1832px;top:124.5px;width:4px;height:1px;background:#9cdcfe;opacity:0.5"></i><i style="left:1836px;top:124.5px;width:1px;height:1px;background:#da70d6;opacity:0.5"></i><i style="left:1838px;top:124.5px;width:2px;height:1px;background:#c586c0;opacity:0.5"></i><i style="left:1841px;top:124.5px;width:3px;height:1px;background:#f0a53c;opacity:0.5"></i><i style="left:1844px;top:124.5px;width:1px;height:1px;background:#d4d4d4;opacity:0.5"></i><i style="left:1845px;top:124.5px;width:4px;height:1px;background:#dcdcaa;opacity:0.5"></i><i style="left:1849px;top:124.5px;width:1px;height:1px;background:#da70d6;opacity:0.5"></i><i style="left:1850px;top:124.5px;width:4px;height:1px;background:#b5cea8;opacity:0.5"></i><i style="left:1854px;top:124.5px;width:1px;height:1px;background:#da70d6;opacity:0.5"></i><i style="left:1856px;top:124.5px;width:3px;height:1px;background:#c586c0;opacity:0.5"></i><i style="left:1798px;top:126.5px;width:15px;height:1px;background:#9cdcfe;opacity:0.5"></i><i style="left:1814px;top:126.5px;width:1px;height:1px;background:#d4d4d4;opacity:0.5"></i><i style="left:1816px;top:126.5px;width:4px;height:1px;background:#569cd6;opacity:0.5"></i><i style="left:1798px;top:128.5px;width:5px;height:1px;background:#c586c0;opacity:0.5"></i><i style="left:1804px;top:128.5px;width:11px;height:1px;background:#9cdcfe;opacity:0.5"></i><i style="left:1815px;top:128.5px;width:1px;height:1px;background:#d4d4d4;opacity:0.5"></i><i style="left:1816px;top:128.5px;width:11px;height:1px;background:#dcdcaa;opacity:0.5"></i><i style="left:1827px;top:128.5px;width:1px;height:1px;background:#da70d6;opacity:0.5"></i><i style="left:1828px;top:128.5px;width:2px;height:1px;background:#b5cea8;opacity:0.5"></i><i style="left:1830px;top:128.5px;width:1px;height:1px;background:#d4d4d4;opacity:0.5"></i><i style="left:1832px;top:128.5px;width:6px;height:1px;background:#ce9178;opacity:0.5"></i><i style="left:1838px;top:128.5px;width:1px;height:1px;background:#da70d6;opacity:0.5"></i><i style="left:1840px;top:128.5px;width:2px;height:1px;background:#c586c0;opacity:0.5"></i><i style="left:1843px;top:128.5px;width:3px;height:1px;background:#c586c0;opacity:0.5"></i><i style="left:1798px;top:130.5px;width:15px;height:1px;background:#9cdcfe;opacity:0.5"></i><i style="left:1814px;top:130.5px;width:1px;height:1px;background:#d4d4d4;opacity:0.5"></i><i style="left:1816px;top:130.5px;width:5px;height:1px;background:#569cd6;opacity:0.5"></i><i style="left:1798px;top:132.5px;width:11px;height:1px;background:#9cdcfe;opacity:0.5"></i><i style="left:1809px;top:132.5px;width:1px;height:1px;background:#d4d4d4;opacity:0.5"></i><i style="left:1810px;top:132.5px;width:5px;height:1px;background:#dcdcaa;opacity:0.5"></i><i style="left:1815px;top:132.5px;width:2px;height:1px;background:#da70d6;opacity:0.5"></i><i style="left:1794px;top:134.5px;width:3px;height:1px;background:#c586c0;opacity:0.5"></i><i style="left:1790px;top:136.5px;width:3px;height:1px;background:#c586c0;opacity:0.5"></i><i style="left:1793px;top:136.5px;width:1px;height:1px;background:#ffd700;opacity:0.5"></i><i style="left:1790px;top:140.5px;width:2px;height:1px;background:#6a9955;opacity:0.5"></i><i style="left:1793px;top:140.5px;width:26px;height:1px;background:#6a9955;opacity:0.5"></i><i style="left:1790px;top:142.5px;width:2px;height:1px;background:#6a9955;opacity:0.5"></i><i style="left:1793px;top:142.5px;width:28px;height:1px;background:#6a9955;opacity:0.5"></i><i style="left:1790px;top:144.5px;width:3px;height:1px;background:#f0a53c;opacity:0.5"></i><i style="left:1793px;top:144.5px;width:1px;height:1px;background:#d4d4d4;opacity:0.5"></i><i style="left:1794px;top:144.5px;width:14px;height:1px;background:#dcdcaa;opacity:0.5"></i><i style="left:1808px;top:144.5px;width:1px;height:1px;background:#ffd700;opacity:0.5"></i><i style="left:1809px;top:144.5px;width:8px;height:1px;background:#c586c0;opacity:0.5"></i><i style="left:1817px;top:144.5px;width:2px;height:1px;background:#da70d6;opacity:0.5"></i><i style="left:1794px;top:146.5px;width:2px;height:1px;background:#c586c0;opacity:0.5"></i><i style="left:1797px;top:146.5px;width:15px;height:1px;background:#9cdcfe;opacity:0.5"></i><i style="left:1813px;top:146.5px;width:4px;height:1px;background:#c586c0;opacity:0.5"></i><i style="left:1798px;top:148.5px;width:11px;height:1px;background:#9cdcfe;opacity:0.5"></i><i style="left:1809px;top:148.5px;width:1px;height:1px;background:#d4d4d4;opacity:0.5"></i><i style="left:1810px;top:148.5px;width:9px;height:1px;background:#dcdcaa;opacity:0.5"></i><i style="left:1819px;top:148.5px;width:1px;height:1px;background:#da70d6;opacity:0.5"></i><i style="left:1820px;top:148.5px;width:12px;height:1px;background:#ce9178;opacity:0.5"></i><i style="left:1832px;top:148.5px;width:1px;height:1px;background:#da70d6;opacity:0.5"></i><i style="left:1794px;top:150.5px;width:3px;height:1px;background:#c586c0;opacity:0.5"></i><i style="left:1790px;top:152.5px;width:3px;height:1px;background:#c586c0;opacity:0.5"></i><i style="left:1793px;top:152.5px;width:1px;height:1px;background:#d4d4d4;opacity:0.5"></i><i style="left:1795px;top:152.5px;width:5px;height:1px;background:#b5cea8;opacity:0.5"></i><i style="left:1800px;top:152.5px;width:1px;height:1px;background:#ffd700;opacity:0.5"></i><i style="left:1790px;top:156.5px;width:2px;height:1px;background:#6a9955;opacity:0.5"></i><i style="left:1793px;top:156.5px;width:26px;height:1px;background:#6a9955;opacity:0.5"></i><i style="left:1790px;top:158.5px;width:3px;height:1px;background:#f0a53c;opacity:0.5"></i><i style="left:1793px;top:158.5px;width:1px;height:1px;background:#d4d4d4;opacity:0.5"></i><i style="left:1794px;top:158.5px;width:9px;height:1px;background:#dcdcaa;opacity:0.5"></i><i style="left:1803px;top:158.5px;width:1px;height:1px;background:#ffd700;opacity:0.5"></i><i style="left:1804px;top:158.5px;width:13px;height:1px;background:#ce9178;opacity:0.5"></i><i style="left:1817px;top:158.5px;width:2px;height:1px;background:#d4d4d4;opacity:0.5"></i><i style="left:1819px;top:158.5px;width:8px;height:1px;background:#c586c0;opacity:0.5"></i><i style="left:1827px;top:158.5px;width:2px;height:1px;background:#da70d6;opacity:0.5"></i><i style="left:1794px;top:160.5px;width:2px;height:1px;background:#c586c0;opacity:0.5"></i><i style="left:1797px;top:160.5px;width:15px;height:1px;background:#9cdcfe;opacity:0.5"></i><i style="left:1813px;top:160.5px;width:4px;height:1px;background:#c586c0;opacity:0.5"></i><i style="left:1798px;top:162.5px;width:11px;height:1px;background:#9cdcfe;opacity:0.5"></i><i style="left:1809px;top:162.5px;width:1px;height:1px;background:#d4d4d4;opacity:0.5"></i><i style="left:1810px;top:162.5px;width:9px;height:1px;background:#dcdcaa;opacity:0.5"></i><i style="left:1819px;top:162.5px;width:1px;height:1px;background:#da70d6;opacity:0.5"></i><i style="left:1820px;top:162.5px;width:4px;height:1px;background:#9cdcfe;opacity:0.5"></i><i style="left:1824px;top:162.5px;width:1px;height:1px;background:#da70d6;opacity:0.5"></i><i style="left:1798px;top:164.5px;width:3px;height:1px;background:#f0a53c;opacity:0.5"></i><i style="left:1801px;top:164.5px;width:1px;height:1px;background:#d4d4d4;opacity:0.5"></i><i style="left:1802px;top:164.5px;width:4px;height:1px;background:#dcdcaa;opacity:0.5"></i><i style="left:1806px;top:164.5px;width:1px;height:1px;background:#da70d6;opacity:0.5"></i><i style="left:1807px;top:164.5px;width:22px;height:1px;background:#ce9178;opacity:0.5"></i><i style="left:1829px;top:164.5px;width:2px;height:1px;background:#d4d4d4;opacity:0.5"></i><i style="left:1831px;top:164.5px;width:5px;height:1px;background:#9cdcfe;opacity:0.5"></i><i style="left:1836px;top:164.5px;width:2px;height:1px;background:#d4d4d4;opacity:0.5"></i><i style="left:1838px;top:164.5px;width:10px;height:1px;background:#9cdcfe;opacity:0.5"></i><i style="left:1848px;top:164.5px;width:1px;height:1px;background:#da70d6;opacity:0.5"></i><i style="left:1794px;top:166.5px;width:3px;height:1px;background:#c586c0;opacity:0.5"></i><i style="left:1790px;top:168.5px;width:3px;height:1px;background:#c586c0;opacity:0.5"></i><i style="left:1793px;top:168.5px;width:1px;height:1px;background:#ffd700;opacity:0.5"></i><i style="left:1790px;top:172.5px;width:3px;height:1px;background:#f0a53c;opacity:0.5"></i><i style="left:1793px;top:172.5px;width:1px;height:1px;background:#d4d4d4;opacity:0.5"></i><i style="left:1794px;top:172.5px;width:9px;height:1px;background:#dcdcaa;opacity:0.5"></i><i style="left:1803px;top:172.5px;width:1px;height:1px;background:#ffd700;opacity:0.5"></i><i style="left:1804px;top:172.5px;width:8px;height:1px;background:#c586c0;opacity:0.5"></i><i style="left:1812px;top:172.5px;width:2px;height:1px;background:#da70d6;opacity:0.5"></i><i style="left:1794px;top:174.5px;width:3px;height:1px;background:#f0a53c;opacity:0.5"></i><i style="left:1797px;top:174.5px;width:1px;height:1px;background:#d4d4d4;opacity:0.5"></i><i style="left:1798px;top:174.5px;width:4px;height:1px;background:#dcdcaa;opacity:0.5"></i><i style="left:1802px;top:174.5px;width:1px;height:1px;background:#da70d6;opacity:0.5"></i><i style="left:1803px;top:174.5px;width:18px;height:1px;background:#ce9178;opacity:0.5"></i><i style="left:1821px;top:174.5px;width:2px;height:1px;background:#d4d4d4;opacity:0.5"></i><i style="left:1823px;top:174.5px;width:16px;height:1px;background:#dcdcaa;opacity:0.5"></i><i style="left:1839px;top:174.5px;width:2px;height:1px;background:#da70d6;opacity:0.5"></i><i style="left:1841px;top:174.5px;width:2px;height:1px;background:#d4d4d4;opacity:0.5"></i><i style="left:1843px;top:174.5px;width:12px;height:1px;background:#9cdcfe;opacity:0.5"></i><i style="left:1855px;top:174.5px;width:2px;height:1px;background:#d4d4d4;opacity:0.5"></i><i style="left:1857px;top:174.5px;width:8px;height:1px;background:#b5cea8;opacity:0.5"></i><i style="left:1794px;top:176.5px;width:3px;height:1px;background:#f0a53c;opacity:0.5"></i><i style="left:1797px;top:176.5px;width:1px;height:1px;background:#d4d4d4;opacity:0.5"></i><i style="left:1798px;top:176.5px;width:4px;height:1px;background:#dcdcaa;opacity:0.5"></i><i style="left:1802px;top:176.5px;width:1px;height:1px;background:#da70d6;opacity:0.5"></i><i style="left:1803px;top:176.5px;width:14px;height:1px;background:#ce9178;opacity:0.5"></i><i style="left:1817px;top:176.5px;width:2px;height:1px;background:#d4d4d4;opacity:0.5"></i><i style="left:1819px;top:176.5px;width:4px;height:1px;background:#f0a53c;opacity:0.5"></i><i style="left:1823px;top:176.5px;width:1px;height:1px;background:#d4d4d4;opacity:0.5"></i><i style="left:1824px;top:176.5px;width:22px;height:1px;background:#dcdcaa;opacity:0.5"></i><i style="left:1846px;top:176.5px;width:2px;height:1px;background:#da70d6;opacity:0.5"></i><i style="left:1848px;top:176.5px;width:2px;height:1px;background:#d4d4d4;opacity:0.5"></i><i style="left:1850px;top:176.5px;width:20px;height:1px;background:#9cdcfe;opacity:0.5"></i><i style="left:1870px;top:176.5px;width:1px;height:1px;background:#da70d6;opacity:0.5"></i><i style="left:1790px;top:178.5px;width:3px;height:1px;background:#c586c0;opacity:0.5"></i><i style="left:1793px;top:178.5px;width:2px;height:1px;background:#d4d4d4;opacity:0.5"></i><i style="left:1795px;top:178.5px;width:4px;height:1px;background:#b5cea8;opacity:0.5"></i><i style="left:1799px;top:178.5px;width:1px;height:1px;background:#ffd700;opacity:0.5"></i></div>
<div id="panel"></div>
<div class="ui" style="left:324px;top:649px;color:#969696;font-size:11px;letter-spacing:0px;"><span class="z"  style="width:22.00px">问题</span></div><div style="left:357px;top:649px;width:22px;height:18px;border-radius:9px;background:#4d4d4d;color:#fff;font-size:11px;line-height:18px;text-align:center">29</div><div class="ui" style="left:400px;top:649px;color:#969696;font-size:11px;letter-spacing:0px;"><span class="z"  style="width:22.00px">输出</span></div><div class="ui" style="left:446px;top:649px;color:#e7e7e7;font-size:11px;letter-spacing:0px;"><span class="z"  style="width:55.00px">调试控制台</span></div><div style="left:445px;top:668px;width:59px;height:1px;background:#e7e7e7"></div><div class="ui" style="left:525px;top:649px;color:#969696;font-size:11px;letter-spacing:0px;"><span class="z"  style="width:22.00px">终端</span></div><div style="left:1533px;top:646px;width:301px;height:24px;background:#3c3c3c;border:1px solid #007fd4"></div><div class="ui" style="left:1538px;top:649px;color:#ccc;font-size:12.5px;letter-spacing:-0.45px;">socket</div><div style="left:1571px;top:650px;width:1px;height:16px;background:#d4d4d4"></div><div style="left:1653px;top:649px;width:177px;height:18px;background:#4d4d4d;border-radius:2px"></div><div class="ui" style="left:1661px;top:649px;color:#fff;font-size:13px;letter-spacing:-0.2px;"><span class="z"  style="width:65.00px">正在显示第</span> 17 <span class="z"  style="width:13.00px">页</span>(<span class="z"  style="width:13.00px">共</span> 531 <span class="z"  style="width:13.00px">页</span>)</div><svg style="left:1841px;top:649px" width="16" height="16" viewBox="0 0 16 16" ><path fill="#c5c5c5" d="M10 12.6l.7.7 1.6-1.6 1.6 1.6.8-.7L13 11l1.7-1.6-.8-.8-1.6 1.7-1.6-1.7-.7.8 1.6 1.6-1.6 1.6zM1 4h14V3H1v1zm0 3h14V6H1v1zm8 2.5V9H1v1h8v-.5zM9 13v-1H1v1h8z"/></svg><svg style="left:1867px;top:649px" width="16" height="16" viewBox="0 0 16 16" ><path fill="#c5c5c5" d="M8.024 5.928l-4.357 4.357-.62-.618L7.716 5h.618L13 9.667l-.619.618-4.357-4.357z"/></svg><svg style="left:1889px;top:649px" width="16" height="16" viewBox="0 0 16 16" ><path fill="#c5c5c5" d="M8 8.707l3.646 3.647.708-.707L8.707 8l3.647-3.646-.707-.708L8 7.293 4.354 3.646l-.707.708L7.293 8l-3.646 3.646.707.708L8 8.707z"/></svg><div style="left:305px;top:997px;width:1602px;height:1px;background:#414141"></div><svg style="left:313px;top:998px" width="16" height="16" viewBox="0 0 16 16" ><path fill="#c5c5c5" d="M10.072 8.024L5.715 3.667l.618-.62L11 7.716v.618L6.333 13l-.618-.619 4.357-4.357z"/></svg>
<div class="co" style="top:674px">2022-03-23 14:07:19.9854 [I]-[socket:connect-coreid,prot,addr,port,cert,timeout] 0 UDP edu.ntp.org.cn 123 nil 120</div>
<div class="co" style="top:693px">2022-03-23 14:07:20.0394 [I]-[socket:on_response:] 0 SOCKET_CONNECT 0</div>
<div class="co" style="top:712px">2022-03-23 14:07:20.0414 [I]-[socket:connect: connect ok]</div>
<div class="co" style="top:731px">2022-03-23 14:07:20.0454 [D]-[socket.send] total 48 bytes first 30 bytes <span class="dia"><b></b><u>?</u></span></div>
<div class="co" style="top:750px">2022-03-23 14:07:20.0516 [I]-[socket:on_response:] 0 SOCKET_SEND 0</div>
<div class="co" style="top:769px">2022-03-23 14:07:20.1319 [D]-[socket.recv] 48 nil</div>
<div class="co" style="top:788px">2022-03-23 14:07:20.1388 [I]-[socket:sock_close] 0</div>
<div class="co" style="top:807px">2022-03-23 14:07:20.1423 [I]-[socket:on_response:] 0 SOCKET_CLOSE 0</div>
<div class="co" style="top:826px">2022-03-23 14:07:20.4664 [I]-[socket:connect-coreid,prot,addr,port,cert,timeout] 0 TCP 112.125.89.8 35624 nil 120</div>
<div class="co" style="top:845px">2022-03-23 14:07:20.5329 [I]-[socket:on_response:] 0 SOCKET_CONNECT 0</div>
<div class="co" style="top:864px">2022-03-23 14:07:20.5349 [I]-[socket:connect: connect ok]</div>
<div class="co" style="top:883px">2022-03-23 14:07:40.6142 [I]-[socket:on_response:] 0 SOCKET_SEND 0</div>
<div class="co" style="top:902px">2022-03-23 14:08:00.7600 [I]-[socket:on_response:] 0 SOCKET_SEND 0</div>
<div class="co" style="top:921px">2022-03-23 14:08:17.5830 [I]-[socket:on_response:] 0 SOCKET_SEND 0</div>
<div class="co" style="top:940px">2022-03-23 14:08:37.7294 [I]-[socket:on_response:] 0 SOCKET_SEND 0</div>
<div class="co" style="top:959px">2022-03-23 14:08:57.8413 [I]-[socket:on_response:] 0 SOCKET_SEND 0</div>
<div class="co" style="top:978px">2022-03-23 14:09:17.5928 [I]-[socket:on_response:] 0 SOCKET_SEND 0</div>
<div style="left:867px;top:29px;width:179px;height:32px;background:#333333;box-shadow:0 0 8px 2px rgba(0,0,0,.36)"></div><svg style="left:873px;top:37px" width="16" height="16" viewBox="0 0 16 16" ><path fill="#8a8a8a" d="M5 3h2v2H5zm0 4h2v2H5zm0 4h2v2H5zm4-8h2v2H9zm0 4h2v2H9zm0 4h2v2H9z"/></svg><svg style="left:892px;top:37px" width="16" height="16" viewBox="0 0 16 16" ><path fill="#75beff" d="M4.5 3H6v10H4.5V3zm7 0v10H10V3h1.5z"/></svg><svg style="left:918px;top:37px" width="16" height="16" viewBox="0 0 16 16" ><path fill="#425568" d="M14.25 5.75v-4h-1.5v2.542c-1.145-1.359-2.911-2.209-4.84-2.209-3.177 0-5.92 2.307-6.16 5.398l-.02.269h1.501l.022-.226c.212-2.195 2.202-3.94 4.656-3.94 1.736 0 3.244.875 4.05 2.166h-2.83v1.5h4.163l.962-.975V5.75h-.004zM8 14a2 2 0 1 0 0-4 2 2 0 0 0 0 4z"/></svg><svg style="left:944px;top:37px" width="16" height="16" viewBox="0 0 16 16" ><path fill="#425568" d="M8 9.532h.542l3.905-3.905-1.061-1.06-2.637 2.61V1H7.251v6.177l-2.637-2.61-1.061 1.06 3.905 3.905H8zm1.956 3.481a2 2 0 1 1-4 0 2 2 0 0 1 4 0z"/></svg><svg style="left:970px;top:37px" width="16" height="16" viewBox="0 0 16 16" ><path fill="#425568" d="M8 1h-.542L3.553 4.905l1.061 1.06 2.637-2.61v6.177h1.498V3.355l2.637 2.61 1.061-1.06L8.542 1H8zm1.956 12.013a2 2 0 1 1-4 0 2 2 0 0 1 4 0z"/></svg><svg style="left:996px;top:37px" width="16" height="16" viewBox="0 0 16 16" ><path fill="#89d185" d="M12.75 8a4.5 4.5 0 0 1-8.61 1.834l-1.391.565A6.001 6.001 0 0 0 14.25 8 6 6 0 0 0 3.5 4.334V2.5H2v4l.75.75h3.5v-1.5H4.352A4.5 4.5 0 0 1 12.75 8z"/></svg><svg style="left:1022px;top:37px" width="16" height="16" viewBox="0 0 16 16" ><path fill="#f48771" d="M2 2v12h12V2H2zm10.75 10.75h-9.5v-9.5h9.5v9.5z"/></svg>
<div style="left:47px;top:40px;width:154px;height:25px;background:#252526;border:1px solid #454545;box-shadow:0 2px 8px rgba(0,0,0,.36)"></div><div style="left:43.5px;top:48.5px;width:7px;height:7px;background:#252526;border-left:1px solid #454545;border-bottom:1px solid #454545;transform:rotate(45deg)"></div><div class="ui" style="left:56px;top:43px;color:#ccc;font-size:12px;letter-spacing:-0.05px;"><span class="z"  style="width:60.00px">资源管理器</span> (Ctrl+Shift+E)</div>
</body></html>
